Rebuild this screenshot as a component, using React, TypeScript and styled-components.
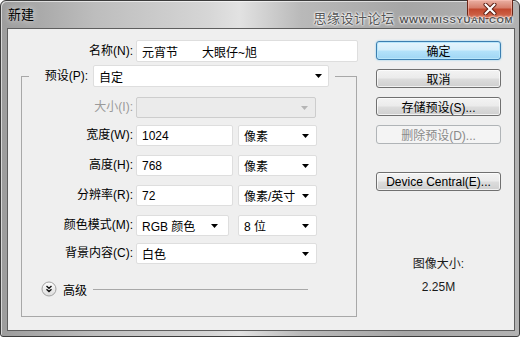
import React from 'react';
import styled, { createGlobalStyle } from 'styled-components';

const GlobalStyle = createGlobalStyle`
  html, body {
    margin: 0;
    padding: 0;
    background: #ffffff;
  }
  body {
    font-family: 'Liberation Sans', 'Noto Sans CJK SC', sans-serif;
    font-size: 12px;
    color: #000;
  }
  * {
    box-sizing: border-box;
  }
`;

const Frame = styled.div`
  position: relative;
  width: 520px;
  height: 337px;
  display: flex;
  flex-direction: column;
  padding: 0 4px 5px 6px;
  border: 1px solid #3c3c3c;
  border-radius: 6px 6px 3px 3px;
  background: linear-gradient(
    to right,
    #9c9c9c 0%,
    #bdbdbd 18%,
    #d6d6d6 40%,
    #e2e2e2 46%,
    #b9b9b9 58%,
    #a6a6a6 78%,
    #b2b2b2 100%
  );
  box-shadow: inset 1px 1px 0 rgba(255, 255, 255, 0.6);
`;

const TitleBar = styled.div`
  height: 27px;
  display: flex;
  align-items: flex-start;
  justify-content: space-between;
`;

const Title = styled.div`
  padding: 5px 0 0 1px;
  font-size: 13px;
  line-height: 17px;
  color: #000;
  text-shadow: 0 0 6px rgba(255, 255, 255, 0.9);
`;

const CloseButton = styled.div`
  width: 46px;
  height: 19px;
  margin: -1px 2px 0 0;
  display: flex;
  align-items: center;
  justify-content: center;
  border: 1px solid #6a2618;
  border-top: none;
  border-radius: 0 0 5px 5px;
  background: linear-gradient(#eab0a3 0%, #d7806d 42%, #c2492f 52%, #d36b4f 100%);
  box-shadow: inset 0 0 0 1px rgba(255, 200, 190, 0.5);
`;

// watermark lies over the title bar and the close button
const Watermark = styled.div`
  position: absolute;
  top: 7px;
  right: 6px;
  display: flex;
  align-items: baseline;
  gap: 5px;
  color: #555;
  text-shadow: 0 0 2px #fff, 0 0 2px #fff, 0 0 3px #fff;
  pointer-events: none;
`;

const WatermarkCn = styled.span`
  font-size: 13px;
  letter-spacing: 0.5px;
`;

const WatermarkEn = styled.span`
  font-size: 9.5px;
  font-weight: bold;
  letter-spacing: 0.6px;
`;

const Client = styled.div`
  flex: 1;
  display: flex;
  padding: 11px 0 0 0;
  border: 1px solid #5e5e5e;
  background: #efefef;
`;

const LeftCol = styled.div`
  width: 349px;
  display: flex;
  flex-direction: column;
`;

const NameRow = styled.div`
  display: grid;
  grid-template-columns: 125px 222px;
  column-gap: 3px;
  align-items: center;
`;

const Label = styled.div<{ $disabled?: boolean }>`
  text-align: right;
  white-space: nowrap;
  line-height: 21px;
  color: ${p => (p.$disabled ? '#9a9a9a' : '#000')};
`;

const TextBox = styled.div<{ $w?: number; $h?: number }>`
  width: ${p => (p.$w ? `${p.$w}px` : '100%')};
  height: ${p => p.$h || 21}px;
  padding-left: 5px;
  display: flex;
  align-items: center;
  background: #fff;
  border: 1px solid #dedede;
  border-radius: 2px;
  white-space: pre;
`;

const SelectBox = styled.div<{ $w?: number; $h?: number; $disabled?: boolean; $arrowRight?: number }>`
  position: relative;
  width: ${p => (p.$w ? `${p.$w}px` : '100%')};
  height: ${p => p.$h || 21}px;
  padding-left: 5px;
  display: flex;
  align-items: center;
  background: ${p => (p.$disabled ? '#ebebeb' : '#fff')};
  border: 1px solid ${p => (p.$disabled ? '#cdcdcd' : '#dedede')};
  border-radius: 2px;
  white-space: pre;

  svg {
    position: absolute;
    right: ${p => p.$arrowRight ?? 7}px;
    top: 50%;
    margin-top: -2px;
  }
`;

const Group = styled.fieldset`
  width: 336px;
  min-width: 0;
  margin: 3px 0 0 13px;
  padding: 0 0 19px 0;
  border: 1px solid #a8a8a8;
`;

const Legend = styled.legend`
  margin-left: 7px;
  padding: 0 6px 0 0;
`;

const LegendInner = styled.div`
  display: flex;
  align-items: center;
  gap: 5px;
`;

const LegendLabel = styled(Label)`
  width: 59px;
`;

const GroupBody = styled.div`
  padding-top: 10px;
`;

const FormRow = styled.div<{ $mt?: number }>`
  display: grid;
  grid-template-columns: 111px 99px 79px;
  column-gap: 3px;
  align-items: center;
  margin-top: ${p => p.$mt || 0}px;
`;

const Span = styled.div`
  grid-column: 2 / 4;
`;

const AdvancedRow = styled.div`
  display: flex;
  align-items: center;
  margin: 17px 48px 0 19px;
  height: 16px;
`;

const AdvancedText = styled.span`
  margin: 0 6px 0 6px;
  font-size: 12px;
`;

const Rule = styled.div`
  flex: 1;
  height: 1px;
  background: #a8a8a8;
`;

const RightCol = styled.div`
  width: 125px;
  margin-left: 19px;
  padding-top: 1px;
  display: flex;
  flex-direction: column;
  gap: 9px;
`;

const Button = styled.div<{ $primary?: boolean; $disabled?: boolean; $mt?: number }>`
  height: 19px;
  margin-top: ${p => p.$mt || 0}px;
  display: flex;
  align-items: center;
  justify-content: center;
  border-radius: 3px;
  font-size: 12px;
  white-space: nowrap;
  color: ${p => (p.$disabled ? '#8a8a8a' : '#000')};
  border: 1px solid ${p => (p.$primary ? '#3c7fb1' : p.$disabled ? '#b0b4b7' : '#707070')};
  background: ${p =>
    p.$primary
      ? 'linear-gradient(#e6f5fd 0%, #d4eefb 48%, #b4e2fa 52%, #9fd6f4 100%)'
      : p.$disabled
      ? '#f4f4f4'
      : 'linear-gradient(#f3f3f3 0%, #ebebeb 48%, #dddddd 52%, #cfcfcf 100%)'};
  box-shadow: ${p =>
    p.$primary
      ? 'inset 0 0 0 1px #b8e6fb, 0 0 2px #7cc8ef'
      : p.$disabled
      ? 'none'
      : 'inset 0 0 0 1px rgba(255, 255, 255, 0.7)'};
`;

const ImageSize = styled.div`
  margin-top: 53px;
  text-align: center;
  line-height: 23px;
  font-size: 12px;
  color: #1a1a1a;
`;

const Arrow = ({ color = '#000' }: { color?: string }) => (
  <svg width="7" height="4" viewBox="0 0 7 4">
    <path d="M0 0 H7 L3.5 4 Z" fill={color} />
  </svg>
);

const CloseX = () => (
  <svg width="14" height="12" viewBox="0 0 14 12">
    <path d="M2.5 1.5 L11.5 10.5 M11.5 1.5 L2.5 10.5" stroke="#5a1a10" strokeWidth="4" strokeLinecap="round" />
    <path d="M2.5 1.5 L11.5 10.5 M11.5 1.5 L2.5 10.5" stroke="#ffffff" strokeWidth="2.2" strokeLinecap="round" />
  </svg>
);

const ExpandIcon = () => (
  <svg width="16" height="16" viewBox="0 0 16 16">
    <defs>
      <linearGradient id="expandFill" x1="0" y1="0" x2="0" y2="1">
        <stop offset="0" stopColor="#ffffff" />
        <stop offset="1" stopColor="#dcdcdc" />
      </linearGradient>
    </defs>
    <circle cx="8" cy="8" r="7" fill="url(#expandFill)" stroke="#a2a2a2" />
    <path d="M5.5 5 L8 7.2 L10.5 5 M5.5 8.3 L8 10.5 L10.5 8.3" stroke="#111" strokeWidth="1.4" fill="none" />
  </svg>
);

type Field = {
  label: string;
  value: string;
  unit: string;
  mt: number;
};

const sizeRows: Field[] = [
  { label: '宽度(W):', value: '1024', unit: '像素', mt: 7 },
  { label: '高度(H):', value: '768', unit: '像素', mt: 9 },
  { label: '分辨率(R):', value: '72', unit: '像素/英寸', mt: 9 },
];

const App = () => {
  return (
    <>
      <GlobalStyle />
      <Frame>
        <TitleBar>
          <Title>新建</Title>
          <CloseButton>
            <CloseX />
          </CloseButton>
        </TitleBar>
        <Watermark>
          <WatermarkCn>思缘设计论坛</WatermarkCn>
          <WatermarkEn>WWW.MISSYUAN.COM</WatermarkEn>
        </Watermark>
        <Client>
          <LeftCol>
            <NameRow>
              <Label>名称(N):</Label>
              <TextBox $h={22}>{'元宵节　　大眼仔~旭'}</TextBox>
            </NameRow>
            <Group>
              <Legend>
                <LegendInner>
                  <LegendLabel>预设(P):</LegendLabel>
                  <SelectBox $w={236} $h={22} $arrowRight={6}>
                    自定
                    <Arrow />
                  </SelectBox>
                </LegendInner>
              </Legend>
              <GroupBody>
                <FormRow>
                  <Label $disabled>大小(I):</Label>
                  <Span>
                    <SelectBox $disabled $w={180}>
                      <Arrow color="#b5b5b5" />
                    </SelectBox>
                  </Span>
                </FormRow>
                {sizeRows.map(row => (
                  <FormRow key={row.label} $mt={row.mt}>
                    <Label>{row.label}</Label>
                    <TextBox $w={97}>{row.value}</TextBox>
                    <SelectBox>
                      {row.unit}
                      <Arrow />
                    </SelectBox>
                  </FormRow>
                ))}
                <FormRow $mt={9}>
                  <Label>颜色模式(M):</Label>
                  <SelectBox $w={93} $arrowRight={10}>
                    RGB 颜色
                    <Arrow />
                  </SelectBox>
                  <SelectBox>
                    8 位
                    <Arrow />
                  </SelectBox>
                </FormRow>
                <FormRow $mt={7}>
                  <Label>背景内容(C):</Label>
                  <Span>
                    <SelectBox>
                      白色
                      <Arrow />
                    </SelectBox>
                  </Span>
                </FormRow>
                <AdvancedRow>
                  <ExpandIcon />
                  <AdvancedText>高级</AdvancedText>
                  <Rule />
                </AdvancedRow>
              </GroupBody>
            </Group>
          </LeftCol>
          <RightCol>
            <Button $primary>确定</Button>
            <Button>取消</Button>
            <Button>存储预设(S)...</Button>
            <Button $disabled>删除预设(D)...</Button>
            <Button $mt={19}>Device Central(E)...</Button>
            <ImageSize>
              图像大小:
              <br />
              2.25M
            </ImageSize>
          </RightCol>
        </Client>
      </Frame>
    </>
  );
};

export default App;
